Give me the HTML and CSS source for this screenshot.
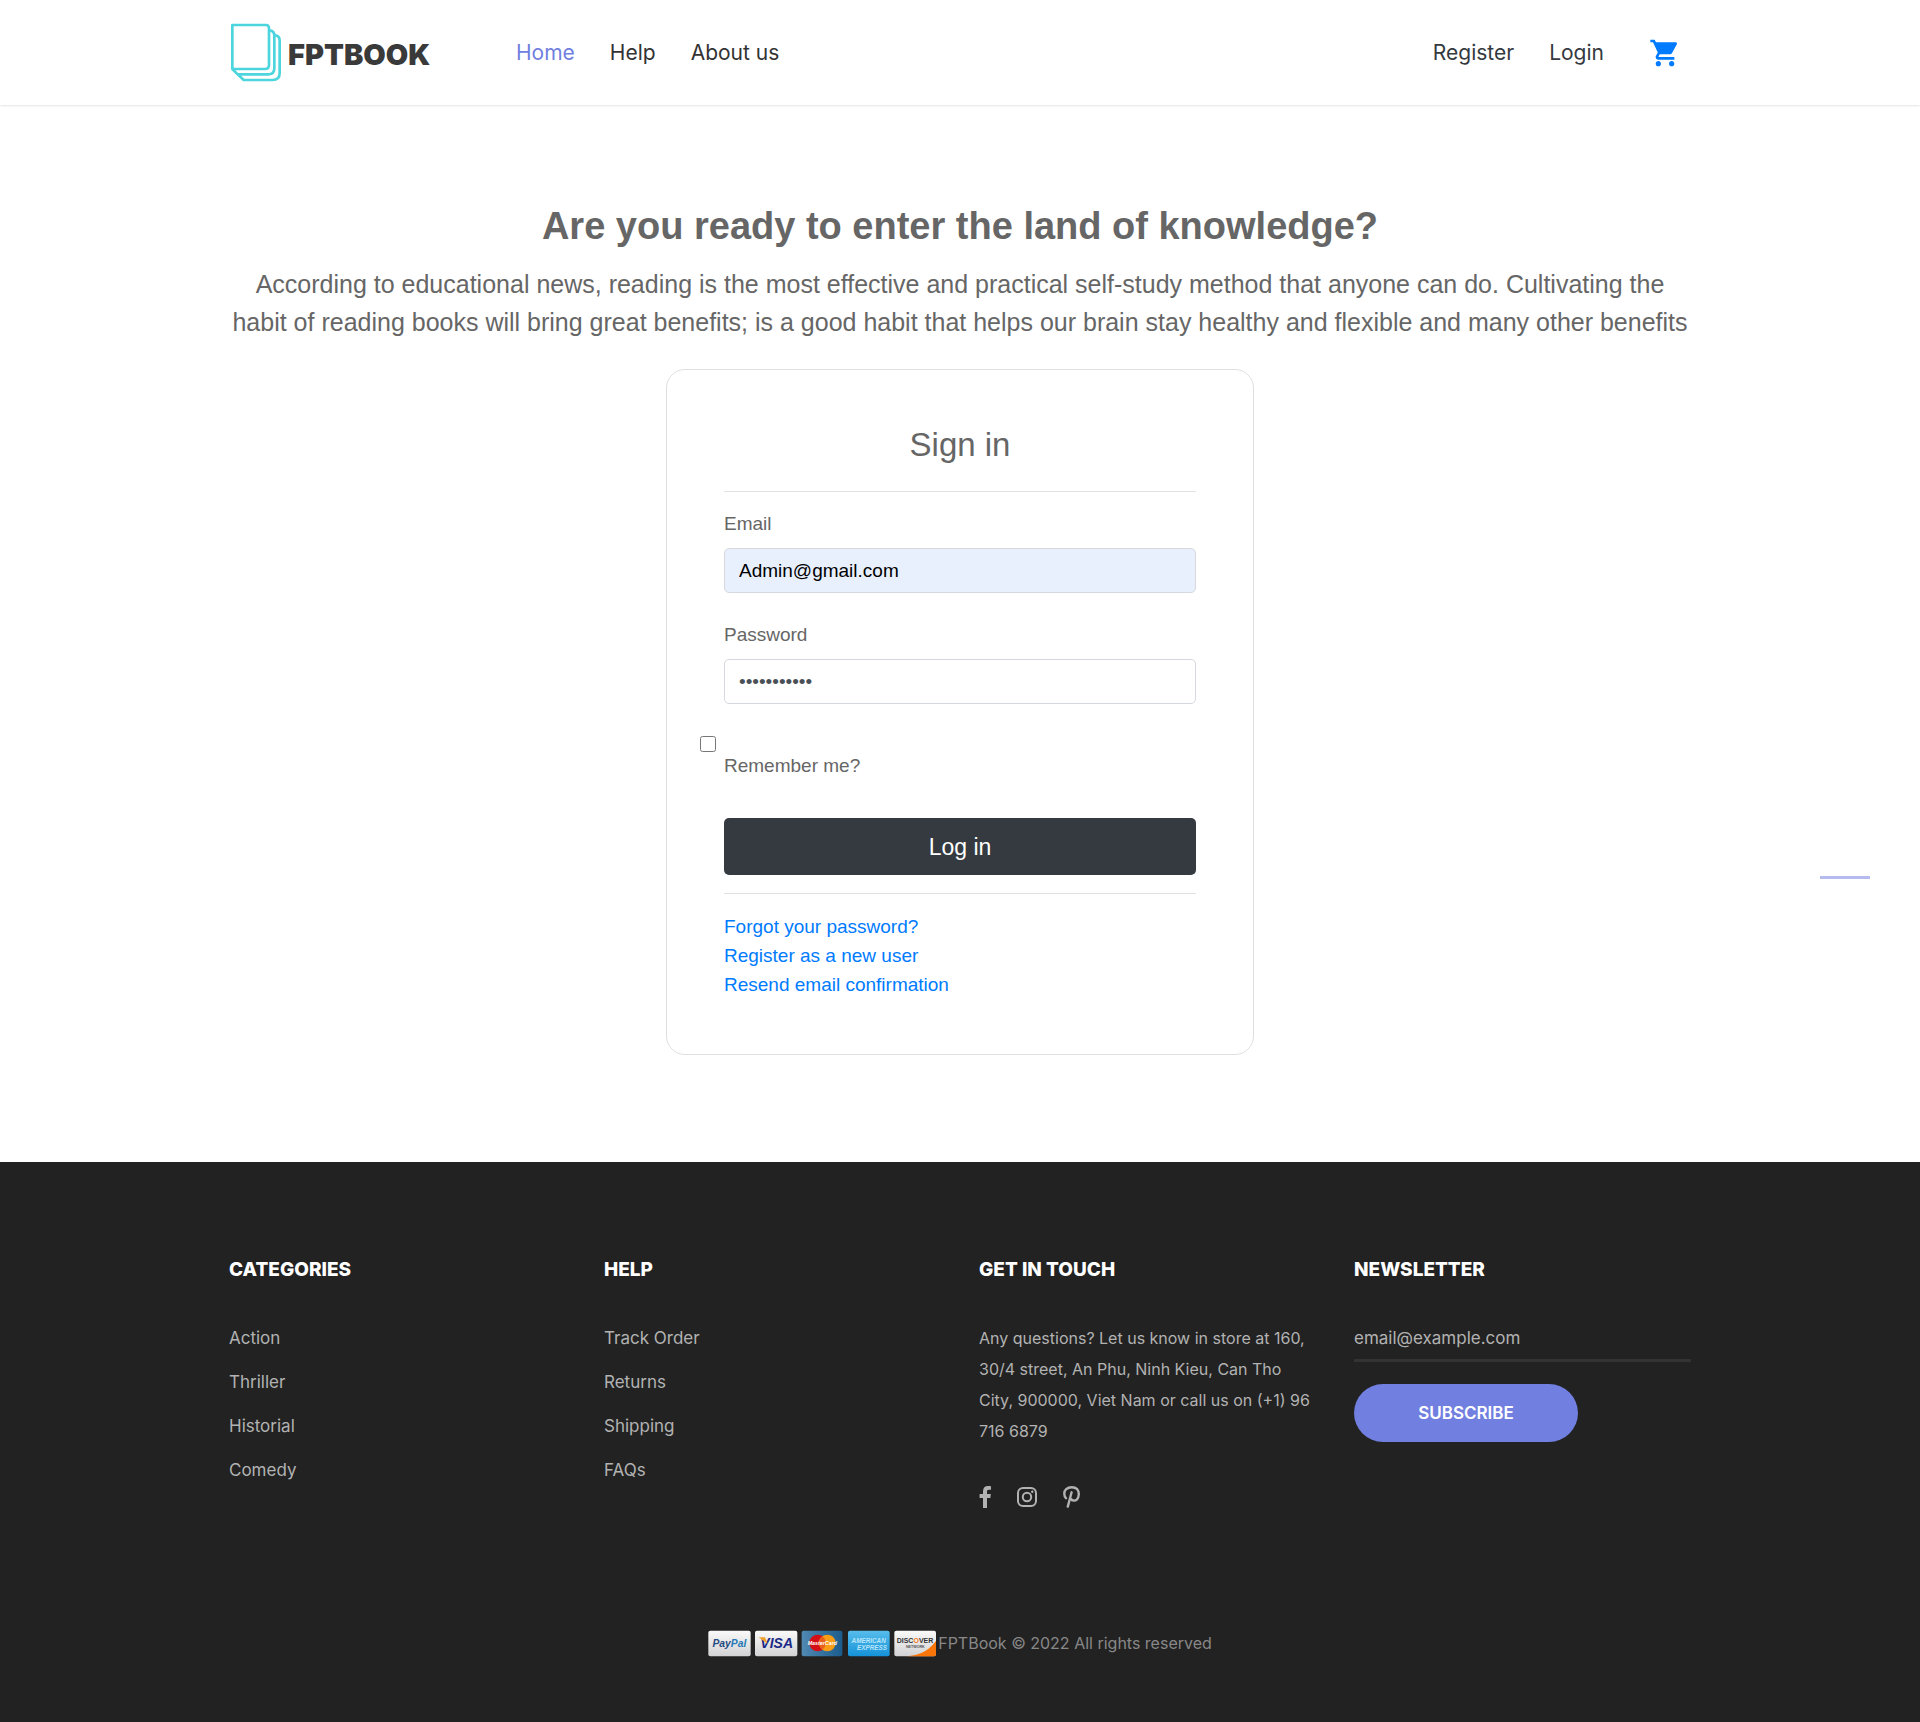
FILE: index.html
```html
<!DOCTYPE html>
<html lang="en">
<head>
<meta charset="utf-8">
<meta name="viewport" content="width=device-width, initial-scale=1">
<title>FPTBook - Sign in</title>
<link rel="stylesheet" href="styles.css">
</head>
<body>
<header class="site-header">
  <div class="container header-row">
    <a class="logo" href="#">
      <svg class="logo-mark" viewBox="30 40 156 177" fill="none" stroke="#4dd5de" stroke-width="8" stroke-linejoin="round" aria-hidden="true">
        <path d="M37 46H138Q147 46 147 56V166Q147 178 135 178H37Z"/>
        <path d="M147 62Q163 62 163 78V176Q163 194 146 194H53L37 178"/>
        <path d="M163 76Q179 78 179 92V190Q179 211 158 211H71L53 194"/>
      </svg>
      <span class="logo-text">FPTBOOK</span>
    </a>
    <nav class="main-nav" aria-label="Main">
      <a class="active" href="#">Home</a>
      <a href="#">Help</a>
      <a href="#">About us</a>
    </nav>
    <nav class="account-nav" aria-label="Account">
      <a href="#">Register</a>
      <a href="#">Login</a>
      <a class="cart" href="#" aria-label="Cart">
        <svg viewBox="0 0 24 24" fill="#007bff" aria-hidden="true"><path d="M7 18c-1.1 0-1.99.9-1.99 2S5.900 22 7 22s2-.9 2-2-.9-2-2-2zM1 2v2h2l3.600 7.590-1.350 2.450c-.16.28-.25.61-.25.960 0 1.100.9 2 2 2h12v-2H7.420c-.14 0-.25-.11-.25-.25l.03-.12.900-1.630h7.450c.75 0 1.410-.41 1.750-1.030l3.580-6.490c.08-.14.12-.31.12-.48 0-.55-.45-1-1-1H5.210l-.94-2H1zm16 16c-1.100 0-1.990.9-1.990 2s.89 2 1.990 2 2-.9 2-2-.9-2-2-2z"/></svg>
      </a>
    </nav>
  </div>
</header>

<main class="container main">
  <h1 class="hero-title">Are you ready to enter the land of knowledge?</h1>
  <p class="hero-text">According to educational news, reading is the most effective and practical self-study method that anyone can do. Cultivating the habit of reading books will bring great benefits; is a good habit that helps our brain stay healthy and flexible and many other benefits</p>
  <form class="card">
    <h2 class="card-title">Sign in</h2>
    <hr>
    <div class="field">
      <label for="email">Email</label>
      <input class="filled" id="email" type="email" value="Admin@gmail.com">
    </div>
    <div class="field">
      <label for="password">Password</label>
      <input id="password" type="password" value="Password@12">
    </div>
    <div class="remember">
      <input id="remember" type="checkbox">
      <label for="remember">Remember me?</label>
    </div>
    <button class="login-button" type="button">Log in</button>
    <hr>
    <div class="card-links">
      <a href="#">Forgot your password?</a>
      <a href="#">Register as a new user</a>
      <a href="#">Resend email confirmation</a>
    </div>
  </form>
</main>

<footer class="site-footer">
  <div class="container">
    <div class="footer-grid">
      <section>
        <h3>CATEGORIES</h3>
        <ul>
          <li><a href="#">Action</a></li>
          <li><a href="#">Thriller</a></li>
          <li><a href="#">Historial</a></li>
          <li><a href="#">Comedy</a></li>
        </ul>
      </section>
      <section>
        <h3>HELP</h3>
        <ul>
          <li><a href="#">Track Order</a></li>
          <li><a href="#">Returns</a></li>
          <li><a href="#">Shipping</a></li>
          <li><a href="#">FAQs</a></li>
        </ul>
      </section>
      <section>
        <h3>GET IN TOUCH</h3>
        <p>Any questions? Let us know in store at 160, 30/4 street, An Phu, Ninh Kieu, Can Tho City, 900000, Viet Nam or call us on (+1) 96 716 6879</p>
        <div class="social">
          <a href="#" aria-label="Facebook"><svg width="12" height="22" viewBox="0 0 12 22" fill="#b2b2b2"><path d="M12 .2V3.700H9.900C8.300 3.700 8 4.500 8 5.600V8.100H11.800L11.300 12H8V22H4V12H.6V8.100H4V5.200C4 1.900 6 0 9 0c1.400 0 2.600.1 3 .2z"/></svg></a>
          <a href="#" aria-label="Instagram"><svg width="20" height="20" viewBox="0 0 20 20" fill="none" stroke="#b2b2b2" stroke-width="2"><rect x="1" y="1" width="18" height="18" rx="5"/><circle cx="10" cy="10" r="4.200"/><circle cx="15.300" cy="4.700" r="1.200" fill="#b2b2b2" stroke="none"/></svg></a>
          <a href="#" aria-label="Pinterest"><svg width="17" height="22" viewBox="0 0 17 22" fill="none" stroke="#b2b2b2" stroke-width="2.400" stroke-linecap="round"><path d="M3 12.200C.6 9.500.8 5.400 3.200 3.200 6 .6 11.500.6 14.200 3.200c2.300 2.500 2 7.800-.2 10.100-2 1.900-5 1.600-6-.4M8.600 6.300 4.800 20.600"/></svg></a>
        </div>
      </section>
      <section>
        <h3>NEWSLETTER</h3>
        <form class="newsletter">
          <input type="email" placeholder="email@example.com" aria-label="Email address">
          <button type="button">SUBSCRIBE</button>
        </form>
      </section>
    </div>
    <div class="footer-bottom">
      <svg class="payments" viewBox="0 0 684 81" role="img" aria-label="Accepted payment cards">
        <defs>
          <linearGradient id="silver" x2="0" y2="1"><stop stop-color="#fafafa"/><stop offset="1" stop-color="#d2d2d4"/></linearGradient>
          <linearGradient id="navy" x2="1" y2="0"><stop stop-color="#5089b2"/><stop offset="1" stop-color="#1c5c8c"/></linearGradient>
          <linearGradient id="sky" x2="0" y2="1"><stop stop-color="#57bdec"/><stop offset="1" stop-color="#1592d8"/></linearGradient>
        </defs>
        <rect x="1" y="2" width="127" height="77" rx="6" fill="url(#silver)"/>
        <text class="pay" x="64" y="50" font-size="31" fill="#1f4a80">Pay<tspan fill="#2578b5">Pal</tspan></text>
        <rect x="141" y="2" width="127" height="77" rx="6" fill="url(#silver)"/>
        <text class="pay" x="206" y="54" font-size="42" fill="#1a2a87">VISA</text>
        <path d="M152 22h19l8 20z" fill="#f0a22b"/>
        <rect x="281" y="2" width="122" height="77" rx="6" fill="url(#navy)"/>
        <circle cx="329" cy="39" r="25" fill="#d40f16"/>
        <circle cx="358" cy="39" r="25" fill="#fa9d16"/>
        <path d="M343 19a25 25 0 0 1 0 40 25 25 0 0 1 0-40z" fill="#e9601c"/>
        <text class="pay" x="343" y="45" font-size="16" fill="#fff">MasterCard</text>
        <rect x="420" y="2" width="125" height="77" rx="6" fill="url(#sky)"/>
        <text class="pay" x="482" y="39" font-size="19" fill="#b9e6fb">AMERICAN</text>
        <text class="pay" x="492" y="59" font-size="19" fill="#b9e6fb">EXPRESS</text>
        <rect x="559" y="2" width="125" height="77" rx="6" fill="url(#silver)"/>
        <path d="M684 32V73q0 6-6 6H598C642 74 666 58 684 32z" fill="#fa7609"/>
        <text class="disc" x="621" y="39" font-size="21" fill="#333">DISC<tspan fill="#f47b20">O</tspan>VER</text>
        <text class="disc" x="622" y="54" font-size="11" fill="#555">NETWORK</text>
      </svg>
      <p>FPTBook © 2022 All rights reserved</p>
    </div>
  </div>
</footer>
<a class="scroll-mark" href="#" aria-label="Back to top"></a>
</body>
</html>
```
FILE: styles.css
```css
* { box-sizing: border-box; }

body {
  margin: 0;
  position: relative;
  background: #fff;
  color: #666;
  font-family: "Liberation Sans", Arial, sans-serif;
  font-size: 19px;
  line-height: 28px;
}

a { text-decoration: none; color: #007bff; }
h1, h2, h3, p, ul { margin: 0; }
svg { display: block; }

.container {
  max-width: 1500px;
  margin: 0 auto;
  padding: 0 19px;
}

/* Header */
.site-header {
  background: #fff;
  box-shadow: 0 0 3px rgba(0, 0, 0, 0.2);
  font-family: Inter, sans-serif;
}
.header-row {
  display: flex;
  align-items: center;
  height: 105px;
}
.logo {
  display: flex;
  align-items: center;
  gap: 6px;
  flex: 0 0 287px;
  padding-left: 1px;
}
.logo-mark { width: 52px; height: 59px; }
.logo-text {
  padding-top: 4px;
  color: #3a3a3a;
  font-size: 29px;
  font-weight: 900;
}
.main-nav, .account-nav {
  display: flex;
  align-items: center;
  gap: 35px;
  font-size: 21px;
}
.main-nav a { color: #333; }
.main-nav .active { color: #717fe0; }
.account-nav { margin-left: auto; padding-right: 10px; }
.account-nav a { color: #343a40; }
.cart { margin-left: 10px; }
.cart svg { width: 32px; height: 32px; }

/* Sign in */
.main {
  padding-top: 99px;
  padding-bottom: 107px;
}
.hero-title {
  font-size: 38px;
  line-height: 45px;
  text-align: center;
}
.hero-text {
  margin: 16px 0 28px;
  font-size: 25px;
  line-height: 38px;
  text-align: center;
}
.card {
  max-width: 588px;
  margin: 0 auto;
  padding: 55px 57px;
  border: 1px solid #dfdfdf;
  border-radius: 19px;
}
.card-title {
  font-size: 33px;
  font-weight: 400;
  line-height: 40px;
  text-align: center;
}
.card hr {
  margin: 18px 0;
  border: 0;
  border-top: 1px solid #e2e2e2;
}
.card-title + hr { margin-top: 26px; }
.field { margin-bottom: 28px; }
.field label, .remember label { display: block; }
.field input {
  display: block;
  width: 100%;
  height: 45px;
  margin-top: 10px;
  padding: 0 14px;
  border: 1px solid #d5d8dc;
  border-radius: 5px;
  background: #fff;
  color: #495057;
  font: inherit;
}
.field .filled { background: #e8f0fe; color: #000; }
.remember { margin: 32px 0 38px; }
.remember input {
  display: block;
  width: 16px;
  height: 16px;
  margin: 0 0 0 -24px;
}
.login-button {
  display: block;
  width: 100%;
  height: 57px;
  border: 0;
  border-radius: 5px;
  background: #343a40;
  color: #fff;
  font: inherit;
  font-size: 23px;
}
.card-links {
  display: flex;
  flex-direction: column;
  align-items: flex-start;
  line-height: 29px;
}

/* Footer */
.site-footer {
  padding: 94px 0 63px;
  background: #222;
  color: #b2b2b2;
  font-family: Inter, sans-serif;
  font-size: 16px;
  line-height: 31px;
}
.site-footer a { display: block; color: #b2b2b2; }
.footer-grid {
  display: grid;
  grid-template-columns: repeat(4, 1fr);
  gap: 38px;
}
.footer-grid h3 {
  margin-bottom: 39px;
  color: #fff;
  font-size: 19px;
  font-weight: 800;
  line-height: 28px;
}
.footer-grid ul {
  display: grid;
  gap: 13px;
  padding: 0;
  list-style: none;
  font-size: 17px;
}
.social {
  display: flex;
  align-items: center;
  gap: 26px;
  margin-top: 39px;
}
.newsletter input {
  display: block;
  width: 100%;
  height: 39px;
  padding: 0 0 6px;
  border: 0;
  border-bottom: 3px solid #333;
  background: transparent;
  color: #b2b2b2;
  font: inherit;
  font-size: 17px;
}
.newsletter input::placeholder { color: #b2b2b2; opacity: 1; }
.newsletter button {
  width: 224px;
  height: 58px;
  margin-top: 22px;
  border: 0;
  border-radius: 29px;
  background: #717fe0;
  color: #fff;
  font: inherit;
  font-size: 17px;
  font-weight: 600;
}
.footer-bottom {
  display: flex;
  align-items: center;
  justify-content: center;
  gap: 2px;
  margin-top: 120px;
  color: #888;
}
.payments { width: 228px; height: 27px; }
.pay, .disc {
  font-family: "Liberation Sans", Arial, sans-serif;
  font-weight: 700;
  text-anchor: middle;
}
.pay { font-style: italic; }

/* Marker floating over the right edge of the page */
.scroll-mark {
  position: absolute;
  top: 876px;
  right: 50px;
  width: 50px;
  height: 3px;
  background: #b5bbef;
}
```
